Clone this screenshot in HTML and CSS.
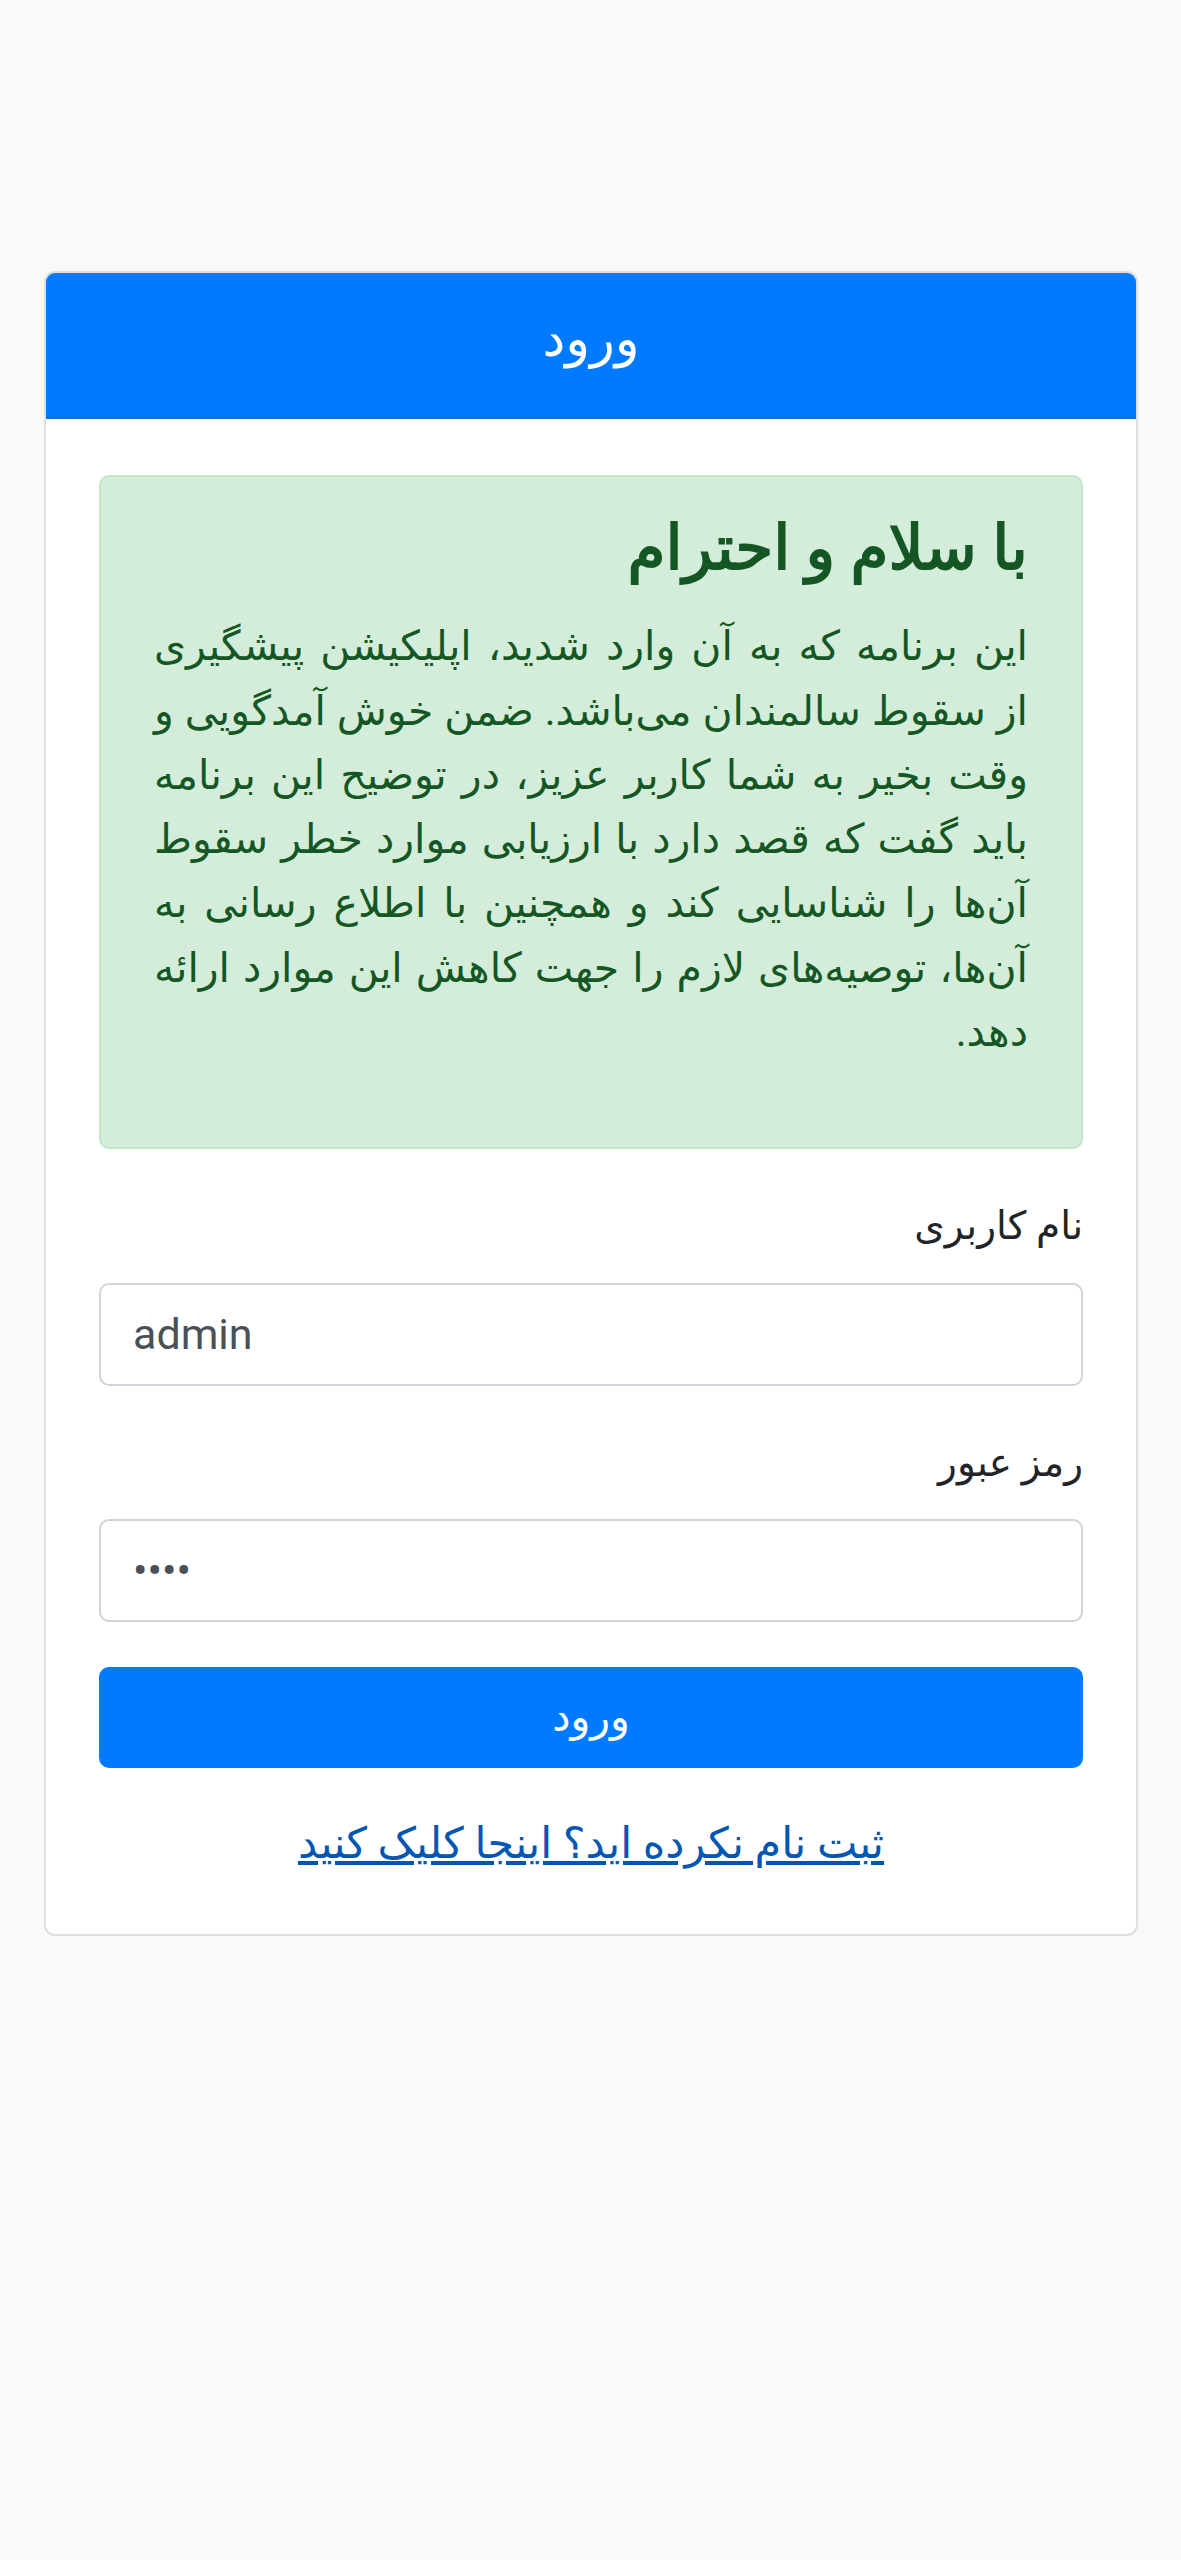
FILE: index.html
```html
<!DOCTYPE html>
<html lang="fa" dir="rtl">
<head>
<meta charset="utf-8">
<title>ورود</title>
<link rel="stylesheet" href="styles.css">
</head>
<body>
<main class="page">
  <section class="card">
    <header class="card-header">
      <h5 class="card-title">ورود</h5>
    </header>
    <div class="card-body">
      <div class="alert">
        <h4 class="alert-heading">با سلام و احترام</h4>
        <p class="alert-text">این برنامه که به آن وارد شدید، اپلیکیشن پیشگیری<br>
از سقوط سالمندان می‌باشد. ضمن خوش آمدگویی و<br>
وقت بخیر به شما کاربر عزیز، در توضیح این برنامه<br>
باید گفت که قصد دارد با ارزیابی موارد خطر سقوط<br>
آن‌ها را شناسایی کند و همچنین با اطلاع رسانی به<br>
آن‌ها، توصیه‌های لازم را جهت کاهش این موارد ارائه<br>
دهد.</p>
      </div>
      <form class="login-form">
        <div class="form-group">
          <label class="form-label" for="username">نام کاربری</label>
          <input class="form-control" id="username" type="text" value="admin" dir="ltr">
        </div>
        <div class="form-group">
          <label class="form-label" for="password">رمز عبور</label>
          <input class="form-control" id="password" type="password" value="1234" dir="ltr">
        </div>
        <button class="btn-primary" type="button">ورود</button>
        <div class="register">
          <a class="register-link" href="#">ثبت نام نکرده اید؟ اینجا کلیک کنید</a>
        </div>
      </form>
    </div>
  </section>
</main>
</body>
</html>
```

FILE: styles.css
```css
* {
  box-sizing: border-box;
}

html, body {
  margin: 0;
  padding: 0;
}

body {
  background: #f8f9fa;
  font-family: Roboto, "DejaVu Sans", sans-serif;
  font-size: 41px;
  line-height: 64.3px;
  color: #212529;
  min-height: 2560px;
}

.page {
  padding: 271px 43px 0 44px;
}

.card {
  background: #fff;
  border: 2px solid #dfdfdf;
  border-radius: 11px;
  overflow: hidden;
}

.card-header {
  background: #007bff;
  color: #fff;
  text-align: center;
  padding: 34px 20px 46px;
  border-bottom: 2px solid #0a6fe0;
}

.card-title {
  margin: 0;
  font-size: 51.25px;
  line-height: 64.3px;
  font-weight: 500;
}

.card-body {
  padding: 56px 53px 58px;
}

.alert {
  background: #d4edda;
  border: 2px solid #c3e6cb;
  border-radius: 10px;
  color: #155724;
  padding: 33px 53px 83px;
  margin-bottom: 45px;
}

.alert-heading {
  margin: 0 0 27px;
  font-size: 61.5px;
  line-height: 77px;
  font-weight: 500;
  -webkit-text-stroke: 1.8px #155724;
}

.alert-text {
  margin: 0;
  text-align: justify;
  text-align-last: justify;
}

.form-group {
  margin-bottom: 45px;
}

.form-label {
  display: block;
  margin-bottom: 24px;
  font-size: 39px;
}

.form-control {
  display: block;
  width: 100%;
  height: 103px;
  padding: 0 32px;
  font-family: Roboto, "DejaVu Sans", sans-serif;
  font-size: 43px;
  color: #495057;
  background: #fff;
  border: 2px solid #ced4da;
  border-radius: 10px;
  text-align: left;
  outline: none;
}

.btn-primary {
  display: block;
  width: 100%;
  height: 101px;
  background: #007bff;
  border: 2px solid #007bff;
  border-radius: 10px;
  color: #fff;
  font-family: Roboto, "DejaVu Sans", sans-serif;
  font-size: 41px;
  line-height: 64.3px;
  padding: 0;
}

.register {
  margin-top: 43px;
  text-align: center;
}

.register-link {
  color: #0056b3;
  font-size: 43px;
  text-decoration: underline;
}
```
